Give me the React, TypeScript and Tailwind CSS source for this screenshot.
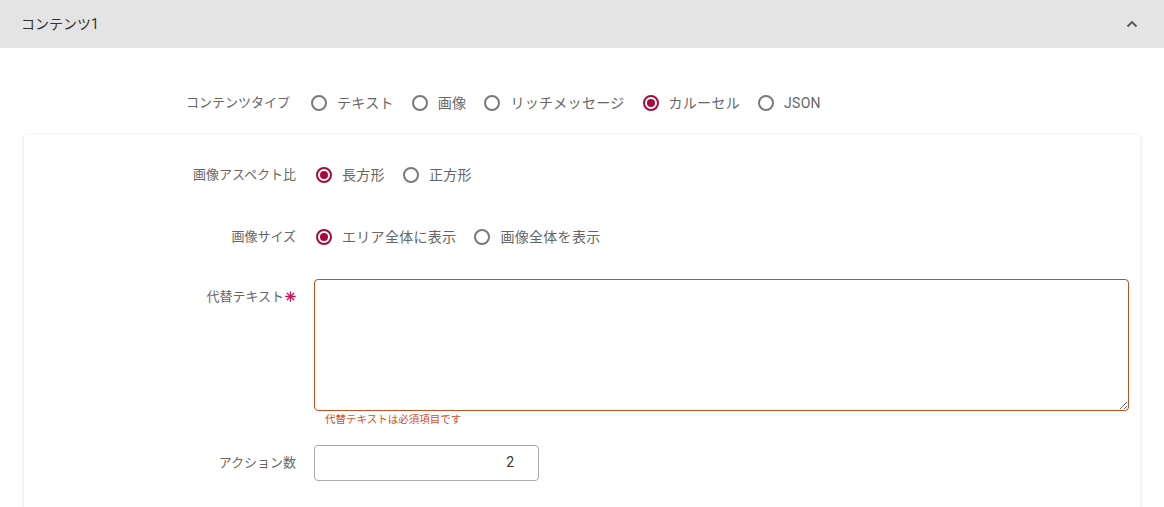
import React from "react";

const FONT = { fontFamily: '"Roboto","Noto Sans CJK JP",sans-serif' };

function Radio({ checked, label }: { checked?: boolean; label: string }) {
  return (
    <label className="flex items-center gap-[10px] cursor-pointer">
      <span
        className={
          "flex h-[16px] w-[16px] items-center justify-center rounded-full border-2 " +
          (checked ? "border-[#a50b3c]" : "border-[#7a7a7a]")
        }
      >
        {checked && <span className="h-[8px] w-[8px] rounded-full bg-[#a50b3c]" />}
      </span>
      <span className="text-[14px] tracking-[0.3px] text-[#666]">{label}</span>
    </label>
  );
}

function Star() {
  return (
    <svg width="11" height="11" viewBox="0 0 11 11" className="ml-[1px] inline-block align-[-1px]">
      <g stroke="#c2185b" strokeWidth="1.3" strokeLinecap="round">
        <path d="M5.5 0.8 V10.2" />
        <path d="M0.8 5.5 H10.2" />
        <path d="M2.2 2.2 L8.8 8.8" />
        <path d="M8.8 2.2 L2.2 8.8" />
      </g>
    </svg>
  );
}

export default function App() {
  return (
    <div className="min-h-screen bg-white" style={FONT}>
      <div className="flex h-12 items-center justify-between bg-[#e4e4e4] pl-[21px] pr-[20px]">
        <span className="text-[14px] text-[#333]">コンテンツ1</span>
        <span className="flex h-6 w-6 items-center justify-center">
          <svg width="12" height="8" viewBox="0 0 12 8" fill="none">
            <path d="M1.5 6.5 L6 2 L10.5 6.5" stroke="#555" strokeWidth="1.8" />
          </svg>
        </span>
      </div>

      <div className="mt-[43px] flex h-6 items-center">
        <div className="w-[290px] text-right text-[13px] text-[#666]">コンテンツタイプ</div>
        <div className="ml-[21px] flex items-center gap-[18px]">
          <Radio label="テキスト" />
          <Radio label="画像" />
          <Radio label="リッチメッセージ" />
          <Radio checked label="カルーセル" />
          <Radio label="JSON" />
        </div>
      </div>

      <div className="mx-6 mt-[20px] rounded-[2px] bg-white pt-[28px] pb-10 pr-[11px] shadow-[0_1px_4px_rgba(0,0,0,0.13)]">
        <div className="flex h-6 items-center">
          <div className="w-[290px] pr-[18px] text-right text-[13px] text-[#666]">画像アスペクト比</div>
          <div className="ml-[2px] flex items-center gap-[18px]">
            <Radio checked label="長方形" />
            <Radio label="正方形" />
          </div>
        </div>

        <div className="mt-[38px] flex h-6 items-center">
          <div className="w-[290px] pr-[18px] text-right text-[13px] text-[#666]">画像サイズ</div>
          <div className="ml-[2px] flex items-center gap-[18px]">
            <Radio checked label="エリア全体に表示" />
            <Radio label="画像全体を表示" />
          </div>
        </div>

        <div className="mt-[30px] flex">
          <div className="w-[290px] shrink-0 pr-[18px] pt-[8px] text-right text-[13px] text-[#666]">
            代替テキスト
            <Star />
          </div>
          <div className="flex-1">
            <textarea className="block h-[132px] w-full rounded-[4px] border border-[#c0501f] bg-white outline-none" />
            <div className="mt-[1px] pl-[11px] text-[10.5px] text-[#d0502a]">代替テキストは必須項目です</div>
          </div>
        </div>

        <div className="mt-[17px] flex items-center">
          <div className="w-[290px] pr-[18px] text-right text-[13px] text-[#666]">アクション数</div>
          <div className="flex h-[36px] w-[225px] items-center justify-end rounded-[4px] border border-[#aaa] pr-[24px] text-[14px] text-[#333]">
            2
          </div>
        </div>
      </div>
    </div>
  );
}
